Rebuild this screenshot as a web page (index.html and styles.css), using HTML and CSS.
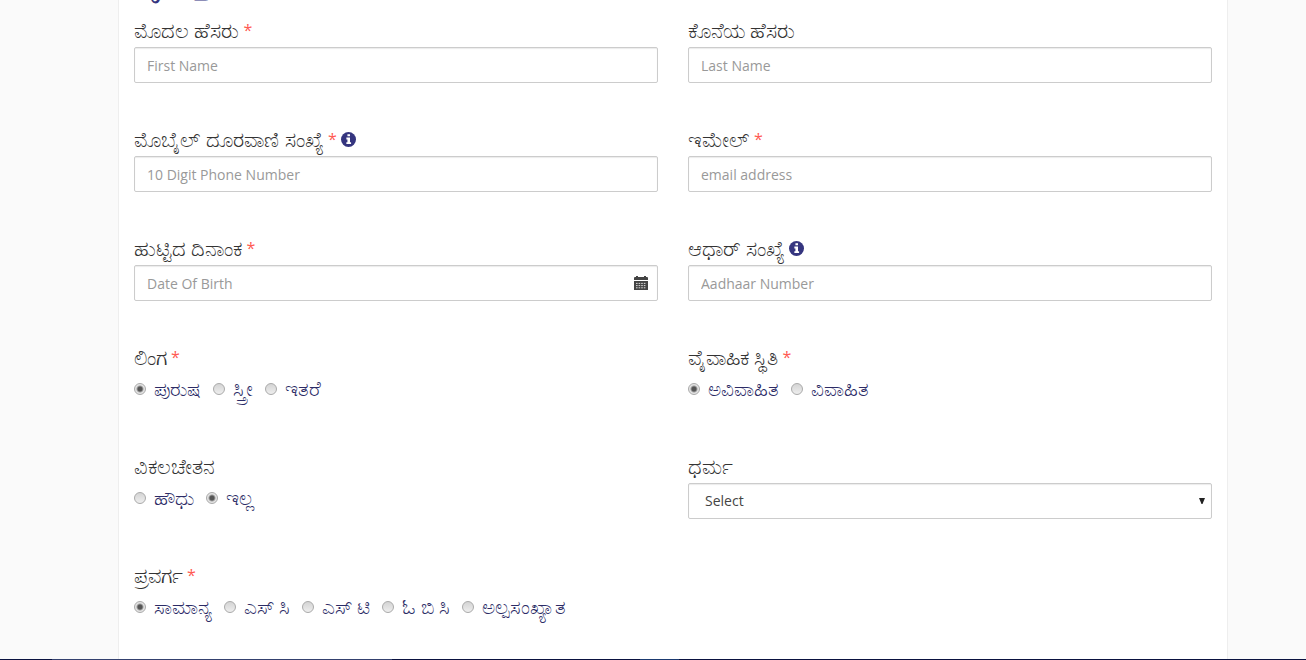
FILE: index.html
```html
<!DOCTYPE html>
<html lang="kn">
<head>
<meta charset="utf-8">
<title>ನೋಂದಣಿ</title>
<link rel="stylesheet" href="styles.css">
</head>
<body>
<main class="page">
<form class="panel">
<h2 class="heading">ವೈಯಕ್ತಿಕ ವಿವರ</h2>
<div class="grid">
  <div class="field">
    <label class="caption" for="first"><span class="kn">ಮೊದಲ ಹೆಸರು</span> <span class="req">*</span></label>
    <input class="control" id="first" type="text" placeholder="First Name">
  </div>
  <div class="field">
    <label class="caption" for="last"><span class="kn">ಕೊನೆಯ ಹೆಸರು</span></label>
    <input class="control" id="last" type="text" placeholder="Last Name">
  </div>
  <div class="field">
    <label class="caption" for="mobile"><span class="kn">ಮೊಬೈಲ್ ದೂರವಾಣಿ ಸಂಖ್ಯೆ</span> <span class="req">*</span>
      <svg class="info" viewBox="0 0 14 14" aria-hidden="true"><circle cx="7" cy="7" r="7" fill="#35357f"/><path fill="#fff" d="M6 2h2.4v2H6zM5 5.2h3.4v4.3H9.4v1.7H5V9.5h1V6.9H5z"/></svg></label>
    <input class="control" id="mobile" type="tel" placeholder="10 Digit Phone Number">
  </div>
  <div class="field">
    <label class="caption" for="email"><span class="kn">ಇಮೇಲ್</span> <span class="req">*</span></label>
    <input class="control" id="email" type="email" placeholder="email address">
  </div>
  <div class="field">
    <label class="caption" for="dob"><span class="kn">ಹುಟ್ಟಿದ ದಿನಾಂಕ</span> <span class="req">*</span></label>
    <div class="wrap">
      <input class="control" id="dob" type="text" placeholder="Date Of Birth">
      <svg class="calendar" viewBox="0 0 14 14" aria-hidden="true"><path fill="#444" d="M0 4V2q0-1 1-1h1V0h2v1h6V0h2v1h1q1 0 1 1v2zM0 5h14v9H0z"/><path stroke="#fff" stroke-width=".8" stroke-dasharray="1.6 1" d="M2 7.4h10.4M2 9.6h10.4M2 11.8h10.4"/></svg>
    </div>
  </div>
  <div class="field">
    <label class="caption" for="aadhaar"><span class="kn">ಆಧಾರ್ ಸಂಖ್ಯೆ</span>
      <svg class="info" viewBox="0 0 14 14" aria-hidden="true"><circle cx="7" cy="7" r="7" fill="#35357f"/><path fill="#fff" d="M6 2h2.4v2H6zM5 5.2h3.4v4.3H9.4v1.7H5V9.5h1V6.9H5z"/></svg></label>
    <input class="control" id="aadhaar" type="text" placeholder="Aadhaar Number">
  </div>
  <fieldset class="field">
    <legend class="caption"><span class="kn">ಲಿಂಗ</span> <span class="req">*</span></legend>
    <div class="choices">
      <label class="choice"><input class="radio" type="radio" name="gender" checked><span class="kn">ಪುರುಷ</span></label>
      <label class="choice"><input class="radio" type="radio" name="gender"><span class="kn">ಸ್ತ್ರೀ</span></label>
      <label class="choice"><input class="radio" type="radio" name="gender"><span class="kn">ಇತರೆ</span></label>
    </div>
  </fieldset>
  <fieldset class="field">
    <legend class="caption"><span class="kn">ವೈವಾಹಿಕ ಸ್ಥಿತಿ</span> <span class="req">*</span></legend>
    <div class="choices">
      <label class="choice"><input class="radio" type="radio" name="marital" checked><span class="kn">ಅವಿವಾಹಿತ</span></label>
      <label class="choice"><input class="radio" type="radio" name="marital"><span class="kn">ವಿವಾಹಿತ</span></label>
    </div>
  </fieldset>
  <fieldset class="field">
    <legend class="caption"><span class="kn">ವಿಕಲಚೇತನ</span></legend>
    <div class="choices">
      <label class="choice"><input class="radio" type="radio" name="disabled"><span class="kn">ಹೌಧು</span></label>
      <label class="choice"><input class="radio" type="radio" name="disabled" checked><span class="kn">ಇಲ್ಲ</span></label>
    </div>
  </fieldset>
  <div class="field">
    <label class="caption" for="religion"><span class="kn">ಧರ್ಮ</span></label>
    <div class="wrap">
      <select class="control select" id="religion"><option>Select</option></select>
      <svg class="arrow" viewBox="0 0 6 6" aria-hidden="true"><path fill="#222" d="M0 0h6L3.5 6h-1z"/></svg>
    </div>
  </div>
  <fieldset class="field">
    <legend class="caption"><span class="kn">ಪ್ರವರ್ಗ</span> <span class="req">*</span></legend>
    <div class="choices">
      <label class="choice"><input class="radio" type="radio" name="category" checked><span class="kn">ಸಾಮಾನ್ಯ</span></label>
      <label class="choice"><input class="radio" type="radio" name="category"><span class="kn">ಎಸ್ ಸಿ</span></label>
      <label class="choice"><input class="radio" type="radio" name="category"><span class="kn">ಎಸ್ ಟಿ</span></label>
      <label class="choice"><input class="radio" type="radio" name="category"><span class="kn">ಓ ಬಿ ಸಿ</span></label>
      <label class="choice"><input class="radio" type="radio" name="category"><span class="kn">ಅಲ್ಪಸಂಖ್ಯಾತ</span></label>
    </div>
  </fieldset>
</div>
</form>
</main>
<footer class="footer"></footer>
</body>
</html>
```
FILE: styles.css
```css
* { box-sizing: border-box; }
html { height: 100%; overflow: hidden; }
body {
  margin: 0;
  height: 100%;
  display: flex;
  flex-direction: column;
  background: #fafafa;
  color: #333;
  font: 14px/20px "Open Sans", sans-serif;
}
.page { flex: 1; display: flex; padding: 0 78px 0 118px; min-height: 0; }
.panel {
  flex: 1;
  max-width: 1110px;
  padding: 0 15px;
  background: #fff;
  border: solid #eee;
  border-width: 0 1px;
}
.heading {
  margin: -35px 0 23px;
  height: 30px;
  font-size: 32px;
  line-height: 30px;
  font-weight: 700;
  color: #35357f;
}
.grid { display: grid; grid-template-columns: 1fr 1fr; column-gap: 30px; grid-auto-rows: 109px; }
.field { margin: 0; padding: 0; border: 0; min-width: 0; }
.caption { display: flex; align-items: center; gap: 4px; height: 24px; margin-bottom: 5px; padding: 0; }
.kn { font-size: 21px; line-height: 24px; white-space: nowrap; word-spacing: normal; }
.req { color: #ff5a52; font-size: 16px; }
.info { width: 15px; height: 15px; }
.control {
  display: block;
  width: 100%;
  height: 36px;
  padding: 6px 12px;
  border: 1px solid #ccc;
  border-radius: 2px;
  background: #fff;
  box-shadow: inset 0 1px 1px rgba(0, 0, 0, .08);
  color: #555;
  font: inherit;
}
.control::placeholder { color: #999; opacity: 1; }
.select { appearance: none; padding: 6px 16px; color: #444; }
.wrap { position: relative; }
.calendar { position: absolute; right: 10px; top: 11px; width: 14px; height: 14px; }
.arrow { position: absolute; right: 7px; top: 15px; width: 6px; height: 6px; pointer-events: none; }
.choices { display: flex; gap: 12px; align-items: center; height: 30px; }
.choice { display: flex; align-items: center; gap: 8px; color: #2b2b66; }
.choice .kn { font-size: 20px; }
.radio {
  appearance: none;
  width: 12px;
  height: 12px;
  margin: 0;
  border: 1px solid #aaa;
  border-radius: 50%;
  background: linear-gradient(#d4d4d4, #eee);
}
.radio:checked { background: radial-gradient(circle, #555 0 2px, #e4e4e4 4px); }
.footer {
  height: 1px;
  background: linear-gradient(90deg, #0a1240 0 4%, #34416f 4% 30%, #0a1240 30% 49%, #1b3a70 49% 52%, #0a1240 52%);
}
```
